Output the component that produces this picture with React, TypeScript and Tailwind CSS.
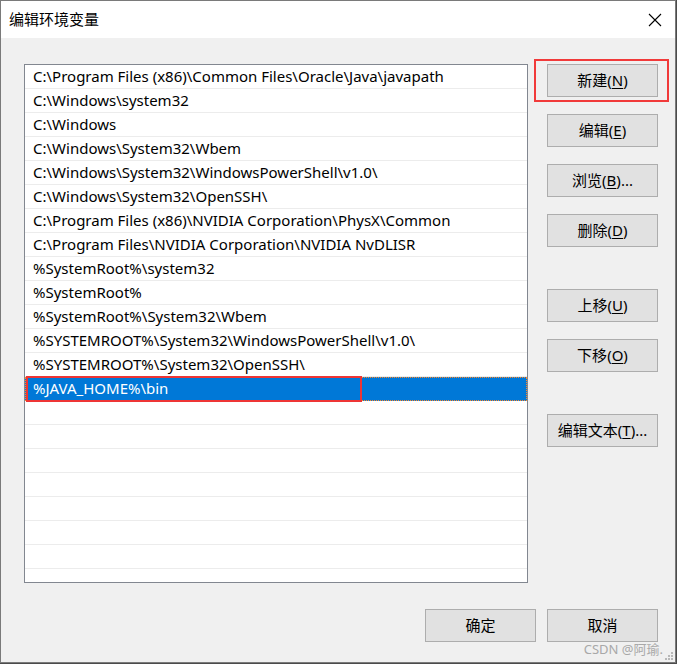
import type { ReactNode } from "react";

const paths = [
    "C:\\Program Files (x86)\\Common Files\\Oracle\\Java\\javapath",
    "C:\\Windows\\system32",
    "C:\\Windows",
    "C:\\Windows\\System32\\Wbem",
    "C:\\Windows\\System32\\WindowsPowerShell\\v1.0\\",
    "C:\\Windows\\System32\\OpenSSH\\",
    "C:\\Program Files (x86)\\NVIDIA Corporation\\PhysX\\Common",
    "C:\\Program Files\\NVIDIA Corporation\\NVIDIA NvDLISR",
    "%SystemRoot%\\system32",
    "%SystemRoot%",
    "%SystemRoot%\\System32\\Wbem",
    "%SYSTEMROOT%\\System32\\WindowsPowerShell\\v1.0\\",
    "%SYSTEMROOT%\\System32\\OpenSSH\\",
    "%JAVA_HOME%\\bin",
];

const SELECTED = 13;
const FONT = "font-['Segoe_UI','Noto_Sans','Noto_Sans_CJK_SC',sans-serif]";

function Mnemonic({ label, mnemonic, suffix = "" }: { label: string; mnemonic: string; suffix?: string }) {
    return (
        <>
            {label}(<span className="underline underline-offset-2">{mnemonic}</span>){suffix}
        </>
    );
}

function DialogButton({ children, className = "", highlight = false }: { children: ReactNode; className?: string; highlight?: boolean }) {
    return (
        <div className={`relative h-[33px] w-[111px] shrink-0 ${className}`}>
            <button className="flex h-full w-full items-center justify-center border border-[#adadad] bg-[#e1e1e1] text-[15px] text-black">
                {children}
            </button>
            {highlight && <span className="pointer-events-none absolute -top-[5px] -bottom-[5px] -left-[13px] -right-[11px] border-[2.5px] border-[#f13a3a]" />}
        </div>
    );
}

function PathRow({ text, index }: { text?: string; index: number }) {
    const selected = index === SELECTED;
    return (
        <div className={`relative h-[24px] shrink-0 border-b border-[#ececec] ${selected ? "border-b-transparent" : ""}`}>
            {selected && (
                <>
                    <div className="absolute inset-x-0 top-0 h-[24px] bg-[#0078d7]" />
                    <div className="absolute inset-x-0 top-0 h-[24px] border border-dotted border-[#ff8728]" />
                    <span className="absolute -top-[1px] left-[1px] h-[26px] w-[336px] border-2 border-[#ee3535]" />
                </>
            )}
            <span className={`relative block pl-[8px] text-[15px] leading-[23px] whitespace-nowrap ${selected ? "text-white" : "text-black"}`}>{text}</span>
        </div>
    );
}

export default function App() {
    const rows = Array.from({ length: 22 }, (_, i) => paths[i]);

    return (
        <div className={`h-[664px] w-[677px] bg-[#4b4b4b] ${FONT}`}>
            <div className="relative flex h-[663px] w-[676px] flex-col border border-[#7a7a7a] bg-[#f0f0f0]">
                {/* title bar */}
                <div className="flex h-[37px] shrink-0 items-center justify-between bg-white pl-[8px] pr-[13px]">
                    <span className="text-[15px] text-black">编辑环境变量</span>
                    <svg width="14" height="14" viewBox="0 0 14 14">
                        <path d="M1 1 L13 13 M13 1 L1 13" stroke="#000" strokeWidth="1.1" />
                    </svg>
                </div>

                <div className="flex pl-[23px] pt-[26px]">
                    <div className="flex h-[519px] w-[504px] shrink-0 flex-col overflow-hidden border border-[#828790] bg-white">
                        {rows.map((text, i) => (
                            <PathRow key={i} text={text} index={i} />
                        ))}
                    </div>

                    <div className="ml-[19px] flex flex-col gap-[17px]">
                        <DialogButton highlight>
                            <Mnemonic label="新建" mnemonic="N" />
                        </DialogButton>
                        <DialogButton>
                            <Mnemonic label="编辑" mnemonic="E" />
                        </DialogButton>
                        <DialogButton>
                            <Mnemonic label="浏览" mnemonic="B" suffix="..." />
                        </DialogButton>
                        <DialogButton>
                            <Mnemonic label="删除" mnemonic="D" />
                        </DialogButton>
                        <DialogButton className="mt-[25px]">
                            <Mnemonic label="上移" mnemonic="U" />
                        </DialogButton>
                        <DialogButton>
                            <Mnemonic label="下移" mnemonic="O" />
                        </DialogButton>
                        <DialogButton className="mt-[25px]">
                            <Mnemonic label="编辑文本" mnemonic="T" suffix="..." />
                        </DialogButton>
                    </div>
                </div>

                <div className="mt-[26px] flex justify-end gap-[11px] pr-[17px]">
                    <DialogButton>确定</DialogButton>
                    <DialogButton>取消</DialogButton>
                </div>

                {/* watermark and size grip */}
                <span className="absolute right-[12px] bottom-[6px] text-[13px] leading-none text-[#a8a8a8]">CSDN @阿瑜.</span>
                <svg width="8" height="8" viewBox="0 0 8 8" className="absolute right-[2px] bottom-[2px]">
                    {[
                        [6, 0],
                        [3, 3],
                        [6, 3],
                        [0, 6],
                        [3, 6],
                        [6, 6],
                    ].map(([x, y]) => (
                        <rect key={`${x}-${y}`} x={x} y={y} width="2" height="2" fill="#b8b8b8" />
                    ))}
                </svg>
            </div>
        </div>
    );
}
